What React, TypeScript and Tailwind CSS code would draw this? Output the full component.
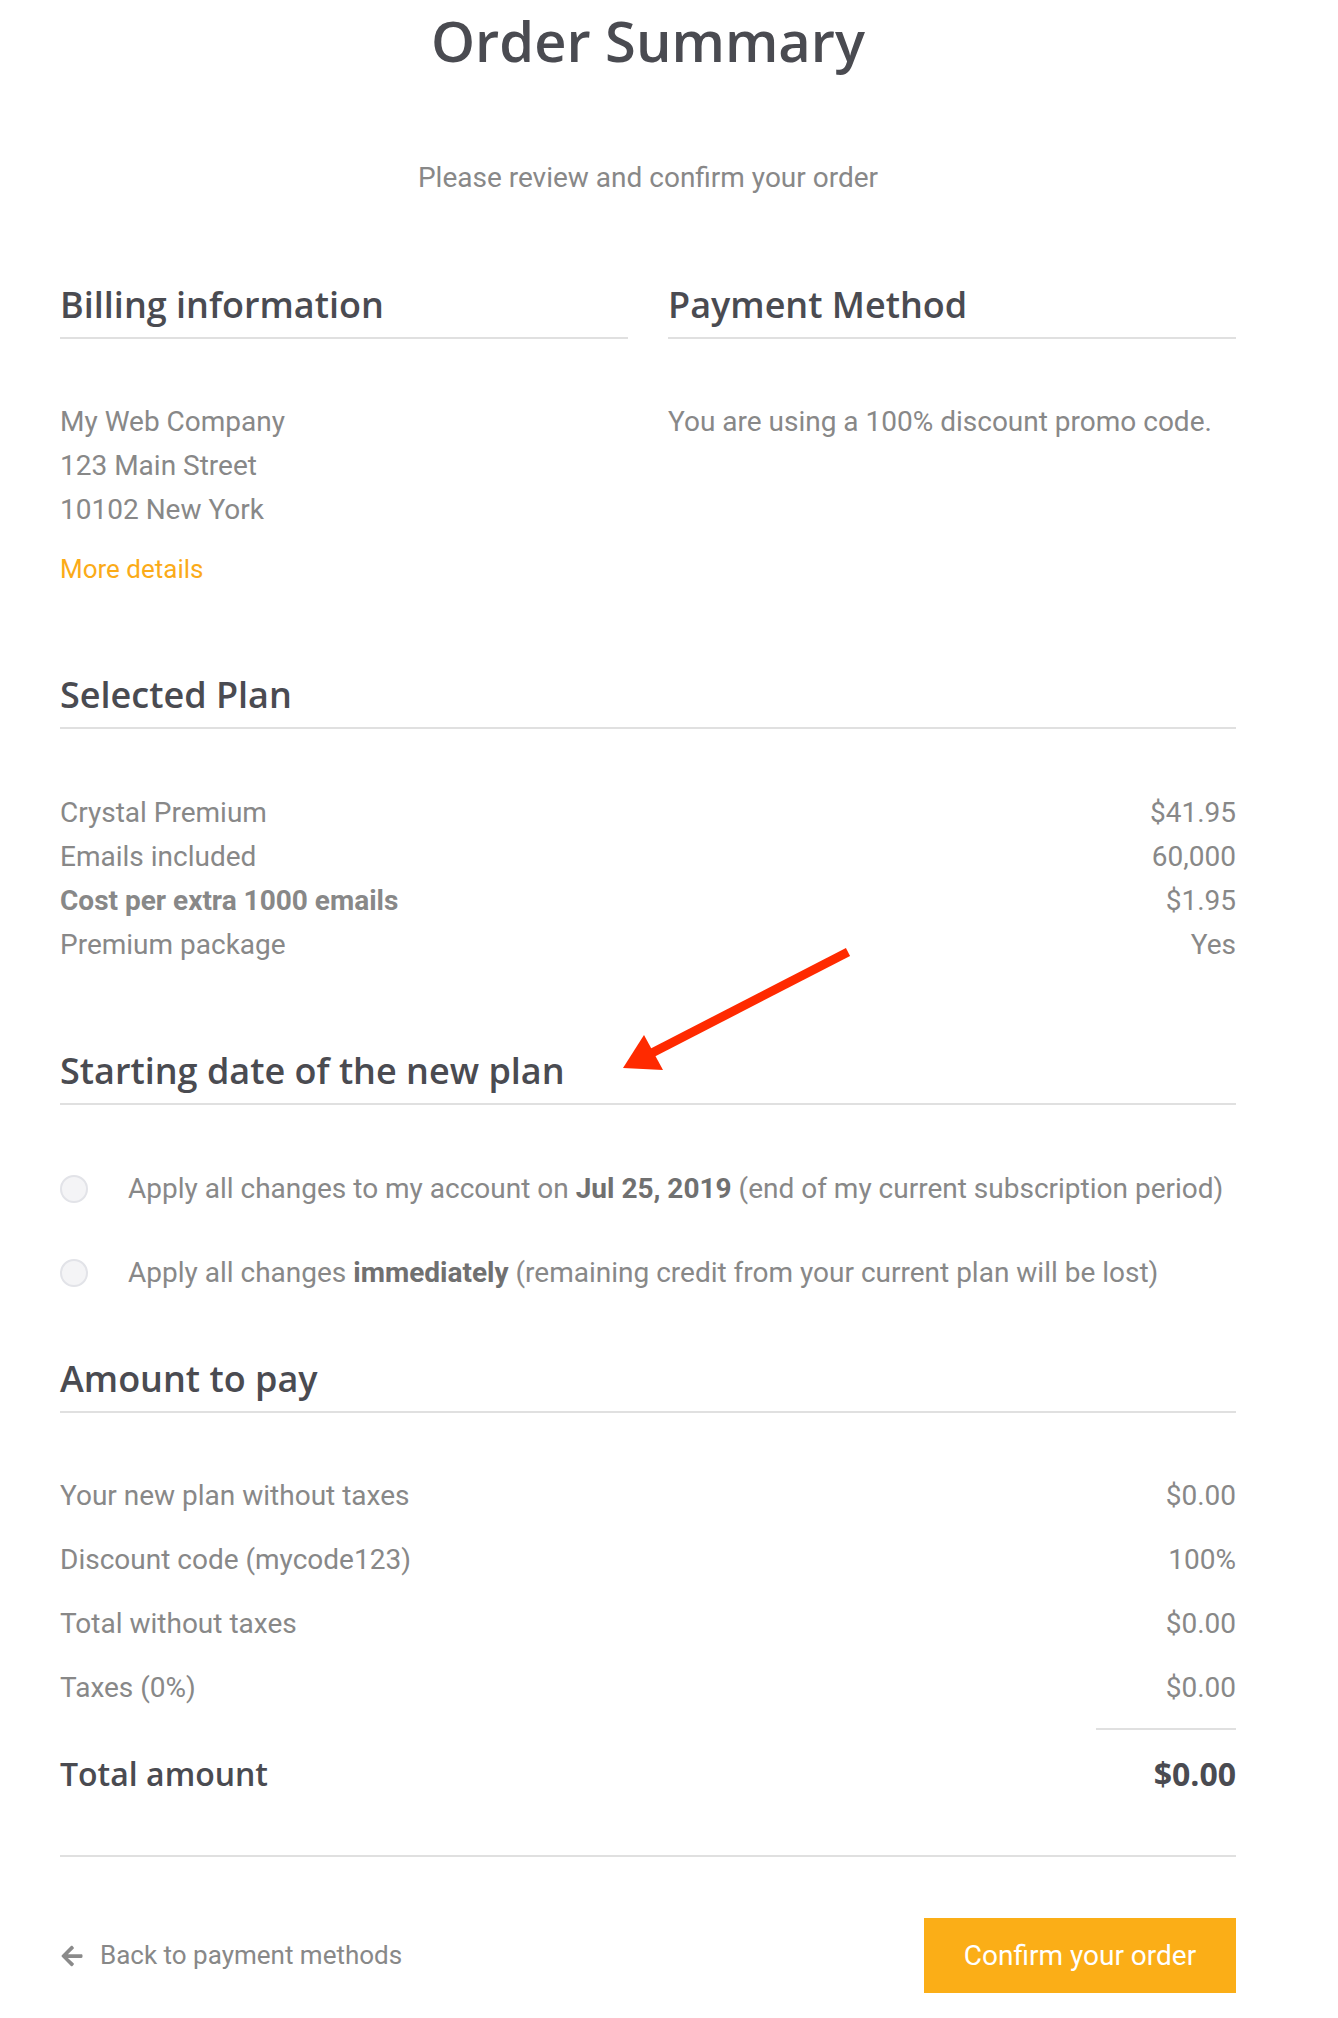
import { FaArrowLeft } from "react-icons/fa";

const head = "font-['Open_Sans',sans-serif] font-semibold text-[#4a4b51]";
const body = "font-['Roboto',sans-serif] text-[28px] text-[#888888]";

function SectionTitle({ children }: { children: React.ReactNode }) {
  return (
    <div className="border-b-2 border-[#e0e0e0] pb-[8px]">
      <h2 className={`${head} text-[36px] leading-[48px] h-[48px]`}>{children}</h2>
    </div>
  );
}

function Row({ label, value, bold }: { label: string; value: string; bold?: boolean }) {
  return (
    <div className={`${body} flex justify-between leading-[44px]`}>
      <span className={bold ? "font-bold" : ""}>{label}</span>
      <span>{value}</span>
    </div>
  );
}

function Radio({ children }: { children: React.ReactNode }) {
  return (
    <label className={`${body} flex items-center leading-[44px]`}>
      <span className="w-[28px] h-[28px] rounded-full border-2 border-[#e2e3e8] bg-[#f4f4f6] shrink-0" />
      <span className="ml-[40px]">{children}</span>
    </label>
  );
}

export default function App() {
  return (
    <div className="relative w-[1338px] min-h-[2018px] bg-white">
      <div className="ml-[60px] w-[1176px]">
        <h1 className={`${head} text-[56px] h-[80px] flex items-center justify-center`}>
          Order Summary
        </h1>
        <p className={`${body} text-center leading-[40px] mt-[78px]`}>
          Please review and confirm your order
        </p>

        <div className="grid grid-cols-2 gap-[40px] mt-[83px]">
          <div>
            <SectionTitle>Billing information</SectionTitle>
            <div className={`${body} leading-[44px] mt-[61px]`}>
              <p>My Web Company</p>
              <p>123 Main Street</p>
              <p>10102 New York</p>
              <a className="block mt-[15px] text-[26px] text-[#fbab18] cursor-pointer">More details</a>
            </div>
          </div>
          <div>
            <SectionTitle>Payment Method</SectionTitle>
            <p className={`${body} leading-[44px] mt-[61px]`}>
              You are using a 100% discount promo code.
            </p>
          </div>
        </div>

        <section className="mt-[80px]">
          <SectionTitle>Selected Plan</SectionTitle>
          <div className="mt-[62px]">
            <Row label="Crystal Premium" value="$41.95" />
            <Row label="Emails included" value="60,000" />
            <Row label="Cost per extra 1000 emails" value="$1.95" bold />
            <Row label="Premium package" value="Yes" />
          </div>
        </section>

        <section className="mt-[80px]">
          <SectionTitle>Starting date of the new plan</SectionTitle>
          <div className="mt-[62px] flex flex-col gap-[40px]">
            <Radio>
              Apply all changes to my account on{" "}
              <b className="text-[#707070]">Jul 25, 2019</b> (end of my current subscription period)
            </Radio>
            <Radio>
              Apply all changes <b className="text-[#707070]">immediately</b> (remaining credit from
              your current plan will be lost)
            </Radio>
          </div>
        </section>

        <section className="mt-[60px]">
          <SectionTitle>Amount to pay</SectionTitle>
          <div className="mt-[61px] flex flex-col gap-[20px]">
            <Row label="Your new plan without taxes" value="$0.00" />
            <Row label="Discount code (mycode123)" value="100%" />
            <Row label="Total without taxes" value="$0.00" />
            <Row label="Taxes (0%)" value="$0.00" />
          </div>
          <div className="flex justify-end mt-[18px]">
            <div className="w-[140px] border-t-2 border-[#e0e0e0]" />
          </div>
          <div className={`${head} text-[32px] leading-[48px] flex justify-between mt-[20px]`}>
            <span>Total amount</span>
            <span className="font-bold">$0.00</span>
          </div>
        </section>

        <div className="border-t-2 border-[#e0e0e0] mt-[57px]" />

        <div className="flex items-center justify-between mt-[61px]">
          <a className="font-['Roboto',sans-serif] text-[26px] text-[#888888] flex items-center gap-[16px] cursor-pointer">
            <FaArrowLeft className="w-[24px] h-[24px] text-[#8a8a8a]" />
            Back to payment methods
          </a>
          <button className="w-[312px] h-[75px] bg-[#fbae17] text-white font-['Roboto',sans-serif] text-[28px]">
            Confirm your order
          </button>
        </div>
      </div>

      <svg
        className="absolute left-0 top-0 pointer-events-none"
        width="1338"
        height="2018"
        viewBox="0 0 1338 2018"
      >
        <line x1="848" y1="952" x2="648" y2="1055" stroke="#ff2a00" strokeWidth="9" />
        <polygon points="623,1068 644,1035 663,1070" fill="#ff2a00" />
      </svg>
    </div>
  );
}
